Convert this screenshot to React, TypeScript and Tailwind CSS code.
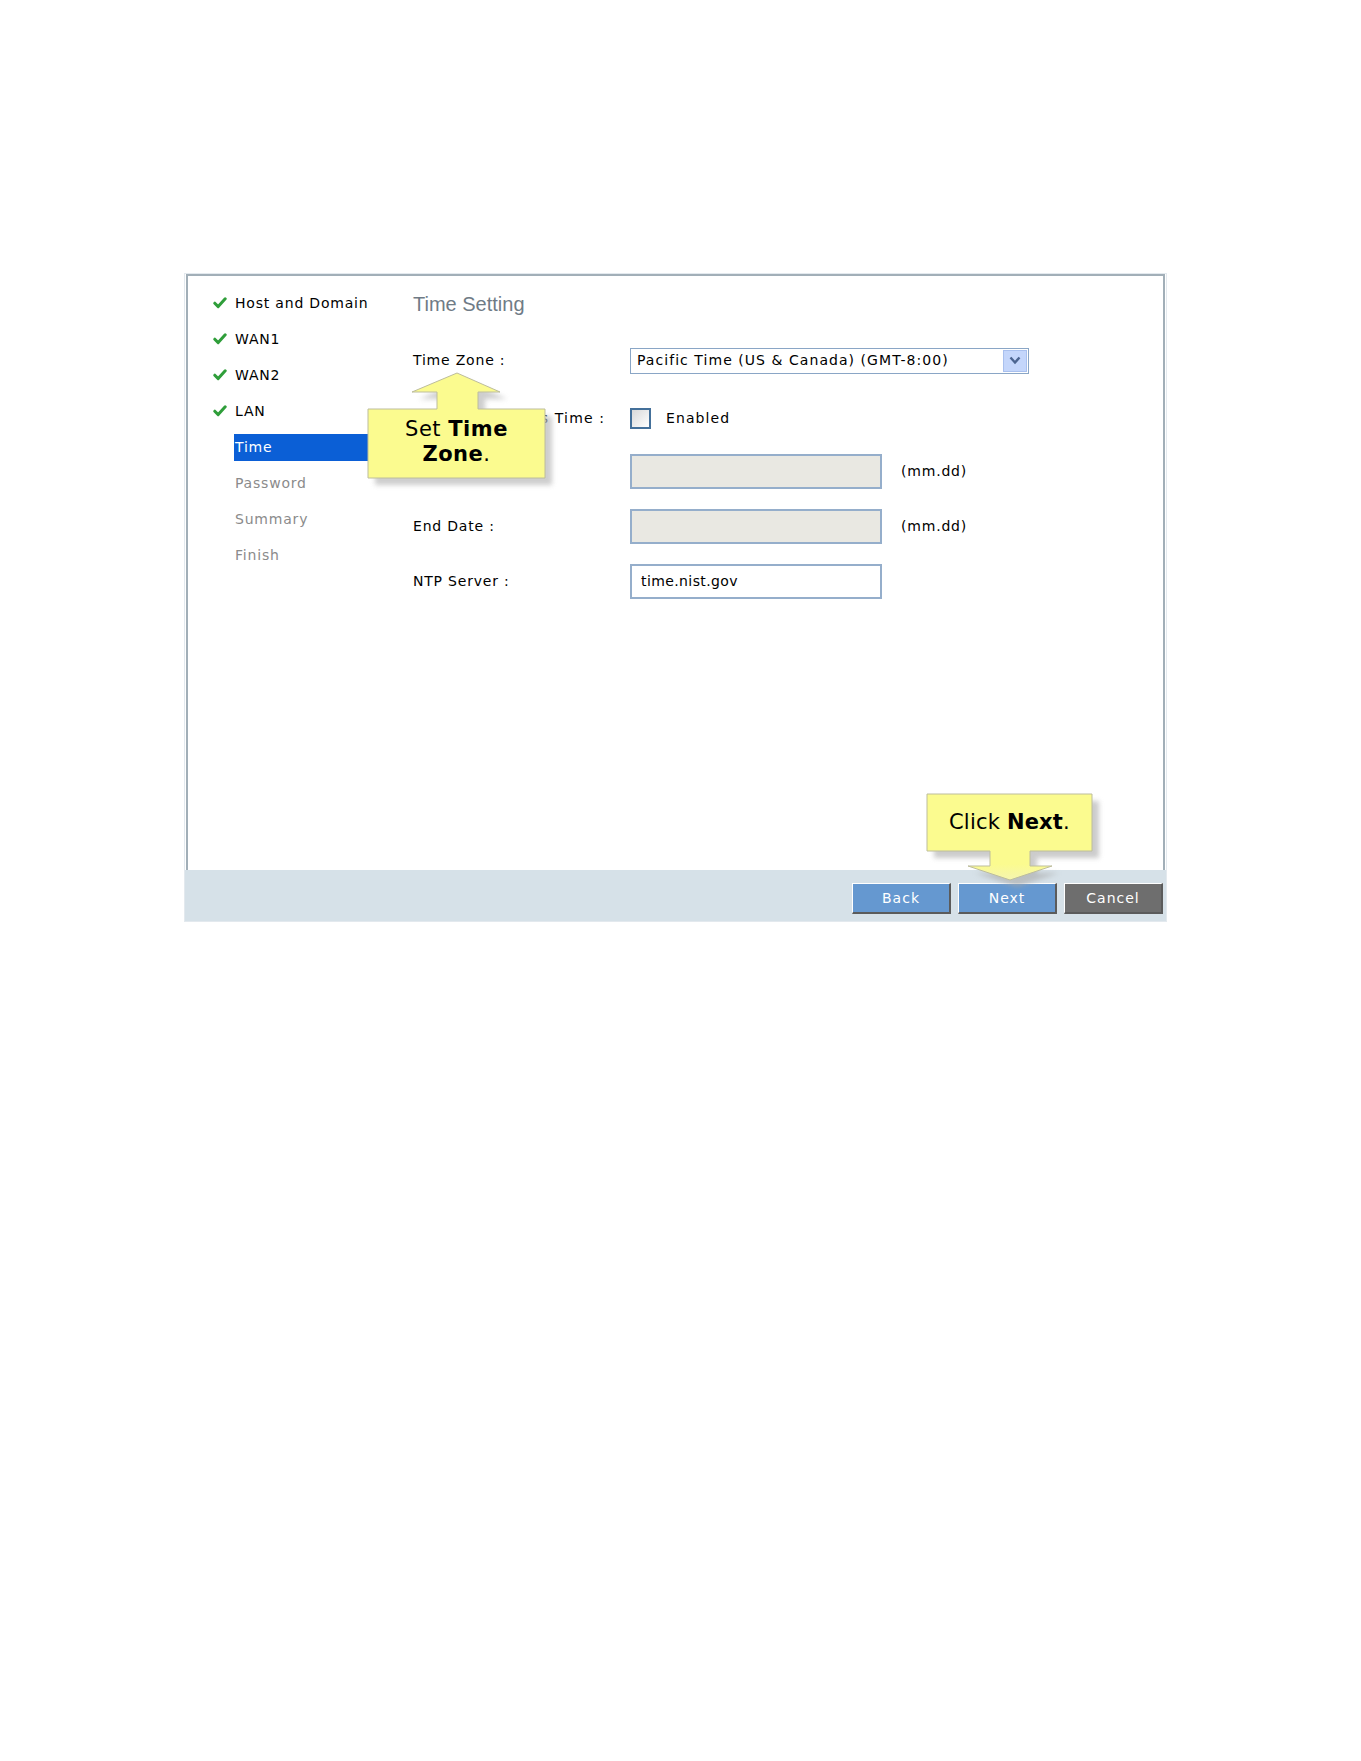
import type { ReactNode } from "react";

// Setup wizard — "Time Setting" step with two hint callouts.

const ui = { fontFamily: "'DejaVu Sans', Verdana, sans-serif" };

type Step = { label: string; state: "done" | "current" | "todo" };

const steps: Step[] = [
  { label: "Host and Domain", state: "done" },
  { label: "WAN1", state: "done" },
  { label: "WAN2", state: "done" },
  { label: "LAN", state: "done" },
  { label: "Time", state: "current" },
  { label: "Password", state: "todo" },
  { label: "Summary", state: "todo" },
  { label: "Finish", state: "todo" },
];

function Check() {
  return (
    <svg width="14" height="12" viewBox="0 0 14 12">
      <path d="M1.8 6.2 L5.2 9.6 L12.2 1.8" fill="none" stroke="#2f9e3a" strokeWidth="3" strokeLinecap="round" strokeLinejoin="round" />
    </svg>
  );
}

function Label({ children, wide }: { children: ReactNode; wide?: boolean }) {
  return (
    <div className={`w-[217px] shrink-0 text-[14px] text-black whitespace-nowrap ${wide ? "tracking-[1.15px]" : "tracking-[0.8px]"}`}>
      {children}
    </div>
  );
}

function TextBox({ value, disabled }: { value?: string; disabled?: boolean }) {
  return (
    <div
      className={`w-[252px] h-[35px] border-2 border-[#95aecb] flex items-center pl-[9px] text-[14px] tracking-[0.4px] text-black ${
        disabled ? "bg-[#e9e8e2]" : "bg-white"
      }`}
    >
      {value}
    </div>
  );
}

function WizardButton({ label, dark }: { label: string; dark?: boolean }) {
  return (
    <button
      className={`w-[99px] h-[31px] border-t border-l border-t-white border-l-white border-b-2 border-r-2 border-b-[#5b5b5b] border-r-[#5b5b5b] text-white text-[14px] tracking-[1px] ${
        dark ? "bg-[#6e6e6e]" : "bg-[#6598d0]"
      }`}
    >
      {label}
    </button>
  );
}

export default function App() {
  return (
    <div className="relative min-h-[1761px] bg-white pt-[273px] pl-[184px]" style={ui}>
      <div className="w-[983px] border border-[#e3e9ee]">
        {/* main panel */}
        <div className="ml-[1px] mr-[1px] h-[596px] border-l-2 border-r-2 border-t-2 border-[#a2afb8] flex">
          {/* step list */}
          <div className="w-[225px] shrink-0 pl-[25px] pt-[9px]">
            {steps.map((s) => (
              <div key={s.label} className="h-[36px] flex items-center">
                <div className="w-[21px] shrink-0 flex items-center">{s.state === "done" && <Check />}</div>
                {s.state === "current" ? (
                  <div className="h-[27px] w-[140px] bg-[#0b5fd6] text-white flex items-center pl-[1px] text-[14px] tracking-[0.8px]">
                    {s.label}
                  </div>
                ) : (
                  <div
                    className={`pl-[1px] text-[14px] tracking-[0.8px] ${
                      s.state === "done" ? "text-black" : "text-[#8b8b8b]"
                    }`}
                  >
                    {s.label}
                  </div>
                )}
              </div>
            ))}
          </div>

          {/* form */}
          <div className="flex-1 flex flex-col pt-[14px]">
            <div
              className="h-[28px] flex items-center text-[20px] text-[#6f7b86]"
              style={{ fontFamily: "'Liberation Sans', Arial, sans-serif" }}
            >
              Time Setting
            </div>

            <div className="mt-[29px] h-[27px] flex items-center">
              <Label>Time Zone :</Label>
              <div className="w-[399px] h-[26px] border border-[#8aa6c6] bg-white flex items-center justify-between pl-[6px] pr-[1px]">
                <span className="text-[14px] tracking-[1.05px] text-black">Pacific Time (US &amp; Canada) (GMT-8:00)</span>
                <span className="w-[24px] h-[22px] bg-[#c4d6fb] border border-[#a9c0ee] flex items-center justify-center">
                  <svg width="12" height="9" viewBox="0 0 12 9">
                    <path d="M1.5 1.5 L6 6.5 L10.5 1.5" fill="none" stroke="#4c6590" strokeWidth="2.4" />
                  </svg>
                </span>
              </div>
            </div>

            <div className="mt-[33px] h-[22px] flex items-center">
              <Label wide>Daylight Savings Time :</Label>
              <div className="w-[21px] h-[21px] border-2 border-[#44709a] bg-gradient-to-br from-[#d9d9d9] to-white" />
              <span className="ml-[15px] text-[14px] tracking-[1.1px] text-black">Enabled</span>
            </div>

            <div className="mt-[25px] h-[35px] flex items-center">
              <Label>Start Date :</Label>
              <TextBox disabled />
              <span className="ml-[19px] text-[14px] tracking-[0.8px] text-black">(mm.dd)</span>
            </div>

            <div className="mt-[20px] h-[35px] flex items-center">
              <Label>End Date :</Label>
              <TextBox disabled />
              <span className="ml-[19px] text-[14px] tracking-[0.8px] text-black">(mm.dd)</span>
            </div>

            <div className="mt-[20px] h-[34px] flex items-center">
              <Label>NTP Server :</Label>
              <TextBox value="time.nist.gov" />
            </div>
          </div>
        </div>

        {/* button bar */}
        <div className="h-[51px] bg-[#d6e1e8] flex justify-end items-start gap-[7px] pt-[13px] pr-[3px]">
          <WizardButton label="Back" />
          <WizardButton label="Next" />
          <WizardButton label="Cancel" dark />
        </div>
      </div>

      {/* hint: time zone */}
      <svg className="absolute left-[355px] top-[365px]" width="215" height="132" viewBox="0 0 215 132">
        <defs>
          <filter id="soft1" x="-20%" y="-20%" width="140%" height="140%">
            <feGaussianBlur stdDeviation="2.5" />
          </filter>
        </defs>
        <polygon
          points="13,44 82,44 82,27 57,27 102,8 145,27 123,27 123,44 190,44 190,113 13,113"
          transform="translate(7 7)"
          fill="#b9b9b9"
          opacity="0.7"
          filter="url(#soft1)"
        />
        <polygon
          points="13,44 82,44 82,27 57,27 102,8 145,27 123,27 123,44 190,44 190,113 13,113"
          fill="#fbfb8f"
          stroke="#bdbd9c"
          strokeWidth="1"
        />
      </svg>
      <div className="absolute left-[368px] top-[409px] w-[177px] h-[66px] flex flex-col items-center justify-center text-[21px] leading-[25px] tracking-[0.5px] text-black">
        <div>
          Set <b>Time</b>
        </div>
        <div>
          <b>Zone</b>.
        </div>
      </div>

      {/* hint: next button */}
      <svg className="absolute left-[915px] top-[785px]" width="200" height="110" viewBox="0 0 200 110">
        <defs>
          <filter id="soft2" x="-20%" y="-20%" width="140%" height="140%">
            <feGaussianBlur stdDeviation="2.5" />
          </filter>
          <linearGradient id="fade2" x1="0" y1="0" x2="0" y2="110" gradientUnits="userSpaceOnUse">
            <stop offset="0.72" stopColor="#fbfb8f" />
            <stop offset="0.88" stopColor="#f4f4b4" />
          </linearGradient>
        </defs>
        <polygon
          points="12,9 177,9 177,66 115,66 115,81 137,81 95,95 53,81 75,81 75,66 12,66"
          transform="translate(7 7)"
          fill="#a9a9a9"
          opacity="0.6"
          filter="url(#soft2)"
        />
        <polygon
          points="12,9 177,9 177,66 115,66 115,81 137,81 95,95 53,81 75,81 75,66 12,66"
          fill="url(#fade2)"
          stroke="#bdbd9c"
          strokeWidth="1"
        />
      </svg>
      <div className="absolute left-[927px] top-[794px] w-[165px] h-[57px] flex items-center justify-center text-[21px] tracking-[0.2px] text-black">
        <span>
          Click <b>Next</b>.
        </span>
      </div>
    </div>
  );
}
